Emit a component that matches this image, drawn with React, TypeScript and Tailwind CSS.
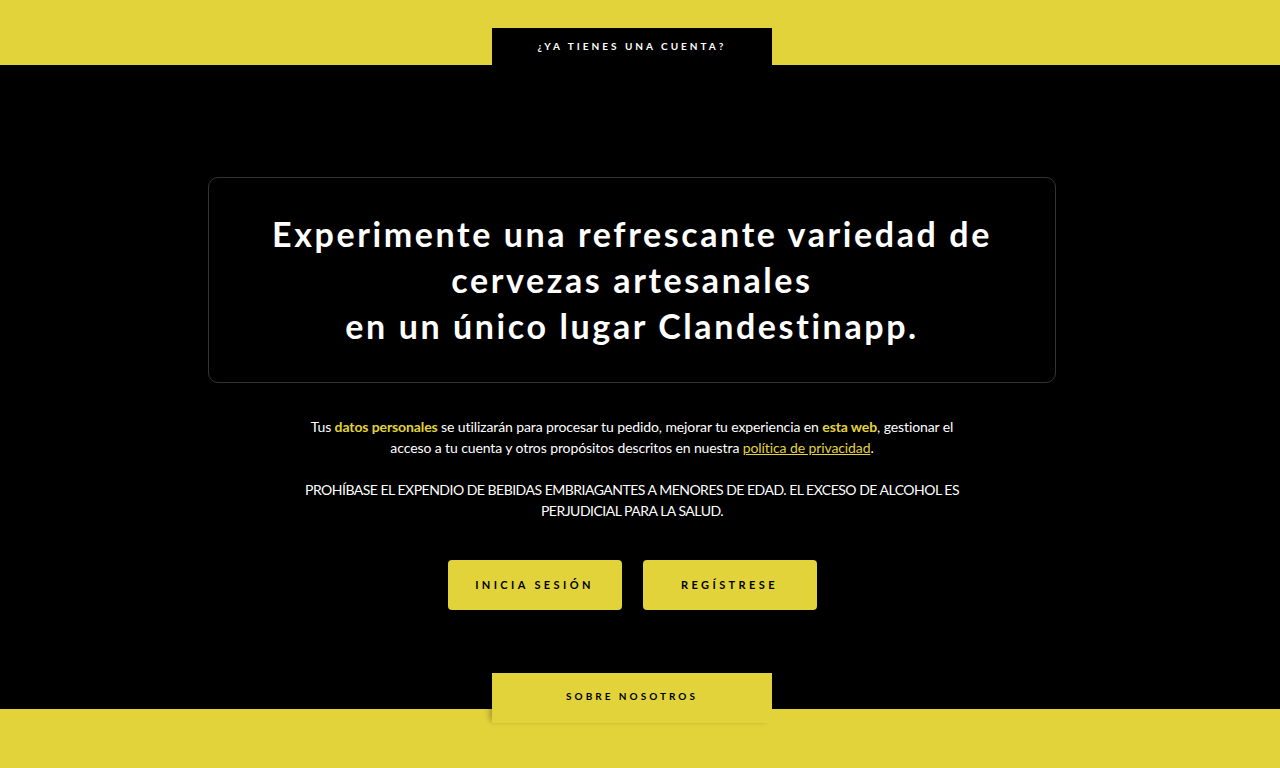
import React from "react";

export default function App() {
  return (
    <div className="w-full h-[768px] flex flex-col bg-black overflow-hidden" style={{ fontFamily: "Lato, 'Noto Sans', sans-serif" }}>
      <div className="h-[65px] shrink-0 bg-[#e3d33b] flex justify-center items-end pr-[16px]">
        <div className="w-[280px] h-[37px] bg-black flex items-center justify-center">
          <span className="text-white font-bold text-[10px] tracking-[3px]">¿YA TIENES UNA CUENTA?</span>
        </div>
      </div>
      <div className="flex-1 flex flex-col items-center pt-[112px] pr-[16px]">
        <div className="w-[848px] h-[206px] border border-[#333333] rounded-[10px] flex items-center justify-center">
          <h1 className="text-white font-bold text-[34px] leading-[46px] tracking-[2.6px] text-center">
            Experimente una refrescante variedad de
            <br />
            cervezas artesanales
            <br />
            en un único lugar Clandestinapp.
          </h1>
        </div>
        <p className="mt-[33px] w-[660px] text-white text-[14px] leading-[21px] text-center tracking-[-0.1px]">
          Tus <span className="text-[#e3d33b] font-bold">datos personales</span> se utilizarán para procesar tu pedido, mejorar tu experiencia en{" "}
          <span className="text-[#e3d33b] font-bold">esta web</span>, gestionar el acceso a tu cuenta y otros propósitos descritos en nuestra{" "}
          <a className="text-[#e3d33b] underline">política de privacidad</a>.
        </p>
        <p className="mt-[21px] w-[700px] text-white text-[14px] leading-[21px] text-center tracking-[-0.5px]">
          PROHÍBASE EL EXPENDIO DE BEBIDAS EMBRIAGANTES A MENORES DE EDAD. EL EXCESO DE ALCOHOL ES PERJUDICIAL PARA LA SALUD.
        </p>
        <div className="mt-[39px] flex gap-[21px]">
          <button className="w-[174px] h-[50px] rounded-[4px] bg-[#e3d33b] text-black font-bold text-[11px] tracking-[3.4px]">INICIA SESIÓN</button>
          <button className="w-[174px] h-[50px] rounded-[4px] bg-[#e3d33b] text-black font-bold text-[11px] tracking-[3.4px]">REGÍSTRESE</button>
        </div>
        <div className="flex-1" />
        <div className="relative z-10 w-[280px] h-[50px] -mb-[14px] bg-[#e3d33b] flex justify-center pt-[17px] shadow-[-4px_0_6px_-2px_rgba(0,0,0,0.3)]">
          <span className="text-black font-bold text-[10px] tracking-[3px] leading-[12px]">SOBRE NOSOTROS</span>
        </div>
      </div>
      <div className="h-[59px] shrink-0 bg-[#e3d33b]" />
    </div>
  );
}
